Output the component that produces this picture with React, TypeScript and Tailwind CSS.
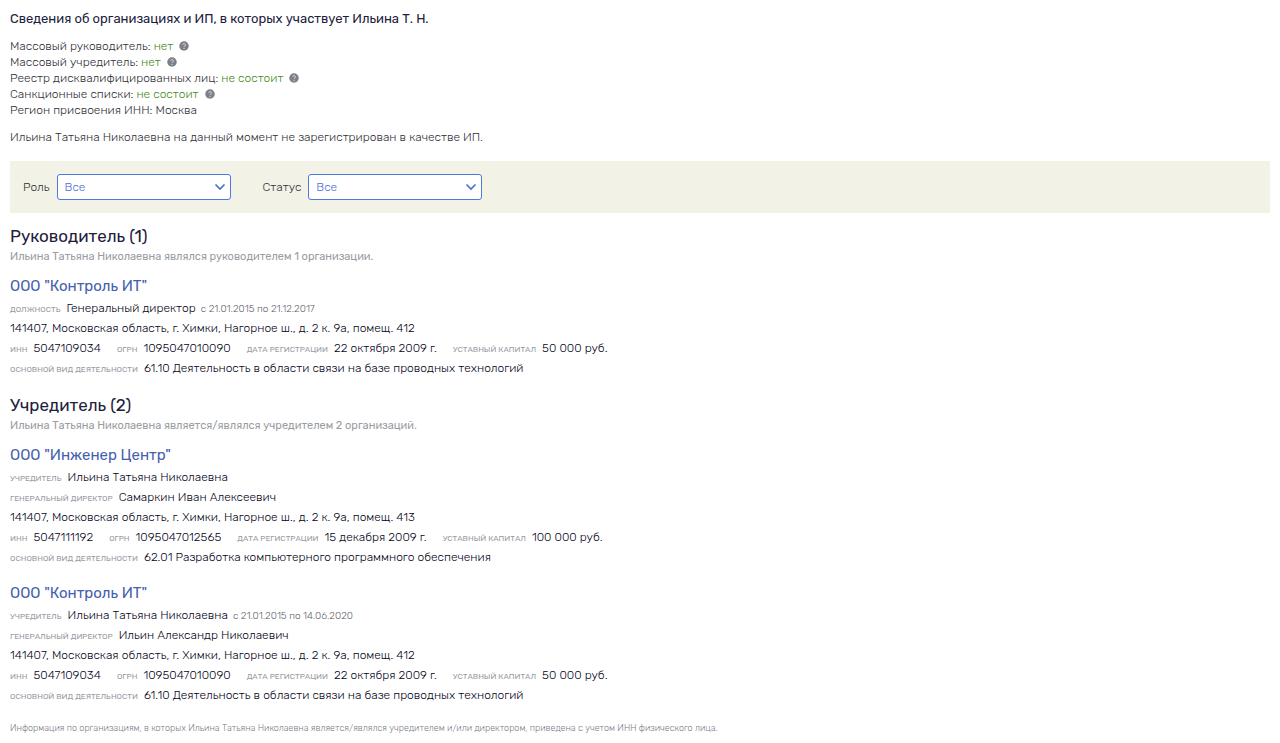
import type { ReactNode } from 'react';

type Company = {
  id: string;
  name: string;
  roles: { label: string; value: string; period?: string }[];
  address: string;
  inn: string;
  ogrn: string;
  registered: string;
  capital: string;
  activity: string;
};

const kontrol = {
  name: 'ООО "Контроль ИТ"',
  address: '141407, Московская область, г. Химки, Нагорное ш., д. 2 к. 9а, помещ. 412',
  inn: '5047109034',
  ogrn: '1095047010090',
  registered: '22 октября 2009 г.',
  capital: '50 000 руб.',
  activity: '61.10 Деятельность в области связи на базе проводных технологий',
};

const headed: Company[] = [
  {
    ...kontrol,
    id: 'headed-kontrol',
    roles: [{ label: 'должность', value: 'Генеральный директор', period: 'с 21.01.2015 по 21.12.2017' }],
  },
];

const founded: Company[] = [
  {
    id: 'founded-engineer',
    name: 'ООО "Инженер Центр"',
    roles: [
      { label: 'учредитель', value: 'Ильина Татьяна Николаевна' },
      { label: 'генеральный директор', value: 'Самаркин Иван Алексеевич' },
    ],
    address: '141407, Московская область, г. Химки, Нагорное ш., д. 2 к. 9а, помещ. 413',
    inn: '5047111192',
    ogrn: '1095047012565',
    registered: '15 декабря 2009 г.',
    capital: '100 000 руб.',
    activity: '62.01 Разработка компьютерного программного обеспечения',
  },
  {
    ...kontrol,
    id: 'founded-kontrol',
    roles: [
      { label: 'учредитель', value: 'Ильина Татьяна Николаевна', period: 'с 21.01.2015 по 14.06.2020' },
      { label: 'генеральный директор', value: 'Ильин Александр Николаевич' },
    ],
  },
];

const checks = [
  { label: 'Массовый руководитель:', value: 'нет' },
  { label: 'Массовый учредитель:', value: 'нет' },
  { label: 'Реестр дисквалифицированных лиц:', value: 'не состоит' },
  { label: 'Санкционные списки:', value: 'не состоит' },
];

function HelpButton({ topic }: { topic: string }) {
  return (
    <button type="button" aria-label={`Справка: ${topic}`} className="ml-1.5 cursor-pointer">
      <svg viewBox="0 0 20 20" className="h-2.5 w-2.5" aria-hidden="true">
        <circle cx="10" cy="10" r="9.5" fill="#7d8088" />
        <path
          d="M7.4 7.6a2.7 2.7 0 1 1 4.2 2.4c-1 .6-1.5 1-1.5 2"
          fill="none"
          stroke="#e4e5e8"
          strokeWidth="1.8"
        />
        <circle cx="10.1" cy="14.6" r="1.2" fill="#e4e5e8" />
      </svg>
    </button>
  );
}

function Filter({ id, label }: { id: string; label: string }) {
  return (
    <div className="flex items-center gap-[7px]">
      <label htmlFor={id}>{label}</label>
      <div className="grid items-center">
        <select
          id={id}
          className="col-start-1 row-start-1 h-[26px] w-[174px] appearance-none rounded-[3px] border border-[#5078dc] bg-white px-[7px] text-[#4a70d9]"
        >
          <option>Все</option>
        </select>
        <svg
          viewBox="0 0 12 8"
          className="pointer-events-none col-start-1 row-start-1 mr-[5px] h-2 w-3 justify-self-end"
          aria-hidden="true"
        >
          <path d="M1.5 1.5 6 6l4.5-4.5" fill="none" stroke="#4a70d9" strokeWidth="1.7" />
        </svg>
      </div>
    </div>
  );
}

function Field({ label, children }: { label: string; children: ReactNode }) {
  return (
    <div className="flex items-baseline gap-1.5">
      <span className="text-[8px] leading-none font-normal text-[#999ba3] uppercase">{label}</span>
      <span>{children}</span>
    </div>
  );
}

function CompanyCard({ company }: { company: Company }) {
  return (
    <article>
      <h3 className="text-[15px] leading-5 font-normal text-[#4460ad]">
        <a href="#company">{company.name}</a>
      </h3>
      <div className="mt-0.5 text-[12px] leading-5 text-[#050520]">
        {company.roles.map((role) => (
          <Field key={role.label} label={role.label}>
            {role.value}
            {role.period && (
              <span className="ml-[5px] text-[10px] leading-none text-[#5d606a]">{role.period}</span>
            )}
          </Field>
        ))}
        <p>{company.address}</p>
        <div className="flex flex-wrap gap-x-4">
          <Field label="инн">{company.inn}</Field>
          <Field label="огрн">{company.ogrn}</Field>
          <Field label="дата регистрации">{company.registered}</Field>
          <Field label="уставный капитал">{company.capital}</Field>
        </div>
        <Field label="основной вид деятельности">{company.activity}</Field>
      </div>
    </article>
  );
}

function Section({ title, note, companies }: { title: string; note: string; companies: Company[] }) {
  return (
    <section>
      <h2 className="text-[17px] leading-6 font-normal text-[#20203c]">{title}</h2>
      <p className="mb-2.5 text-[11px] leading-[18px] font-normal text-[#999ca2]">{note}</p>
      <div className="flex flex-col gap-4">
        {companies.map((company) => (
          <CompanyCard key={company.id} company={company} />
        ))}
      </div>
    </section>
  );
}

export default function App() {
  return (
    <main className="bg-white px-2.5 pt-[9px] pb-2 font-['Rubik',Roboto,sans-serif] text-[12px] font-light text-[#303039]">
      <h1 className="text-[13px] leading-5 font-normal text-[#20203c]">
        Сведения об организациях и ИП, в которых участвует Ильина Т. Н.
      </h1>
      <ul className="mt-[9px] leading-4">
        {checks.map((check) => (
          <li key={check.label} className="flex items-center">
            {check.label}
            <span className="ml-[3px] text-[#468a1a]">{check.value}</span>
            <HelpButton topic={check.label} />
          </li>
        ))}
        <li>Регион присвоения ИНН: Москва</li>
      </ul>
      <p className="mt-[11px] leading-4">
        Ильина Татьяна Николаевна на данный момент не зарегистрирован в качестве ИП.
      </p>
      <form className="mt-4 flex flex-wrap items-center gap-8 bg-[#f2f2e6] p-[13px]">
        <Filter id="role" label="Роль" />
        <Filter id="status" label="Статус" />
      </form>
      <div className="mt-[11px] flex flex-col gap-[15px]">
        <Section
          title="Руководитель (1)"
          note="Ильина Татьяна Николаевна являлся руководителем 1 организации."
          companies={headed}
        />
        <Section
          title="Учредитель (2)"
          note="Ильина Татьяна Николаевна является/являлся учредителем 2 организаций."
          companies={founded}
        />
      </div>
      <p className="mt-[15px] text-[9px] leading-4 text-[#7b7e86]">
        Информация по организациям, в которых Ильина Татьяна Николаевна является/являлся учредителем и/или директором,
        приведена с учетом ИНН физического лица.
      </p>
    </main>
  );
}
